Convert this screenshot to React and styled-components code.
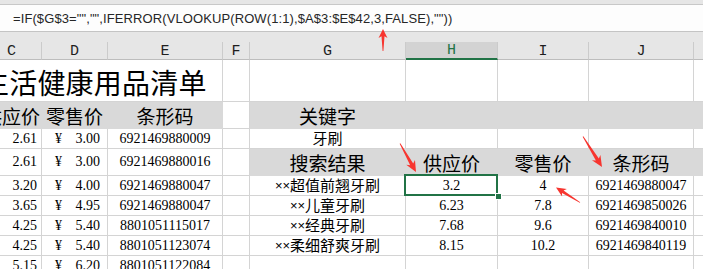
import React from "react";
import styled, { createGlobalStyle, css } from "styled-components";

const GlobalStyle = createGlobalStyle`
  html, body { margin: 0; padding: 0; background: #ffffff; overflow: hidden; }
`;

const CJK = `"Noto Sans CJK SC", "Liberation Sans", sans-serif`;
const MIXED = `"Liberation Sans", "Noto Sans CJK SC", sans-serif`;
const SERIF = `"Liberation Serif", "Noto Sans CJK SC", serif`;
const GRID = "#d4d4d4";
const FILL = "#d9d9d9";

const Window = styled.div`
  position: relative;
  width: 703px;
  height: 269px;
  overflow: hidden;
  background: #e6e6e6;
`;

const TopStrip = styled.div`
  height: 4px;
  border-bottom: 1px solid #c8c8c8;
  background: #e6e6e6;
`;

const FormulaBar = styled.div`
  height: 26px;
  border-bottom: 1px solid #c4c4c4;
  background: #fdfdfd;
  display: flex;
  align-items: center;
  padding-left: 13px;
  font-family: "Liberation Sans", Arial, sans-serif;
  font-size: 13px;
  color: #262626;
  letter-spacing: 0.1px;
  white-space: nowrap;
`;

const Gap = styled.div`
  height: 10px;
`;

const Sheet = styled.div`
  display: grid;
  grid-template-columns: 60px 66px 115px 27px 156px 92px 91px 105px 60px;
  grid-template-rows: 18px 42px 27px 20px 27px 20px 20px 20px 20px 20px;
  margin-left: -18px;
  background: #ffffff;
`;

const ColHead = styled.div`
  box-sizing: border-box;
  display: flex;
  align-items: center;
  justify-content: center;
  font-family: "Liberation Mono", monospace;
  font-size: 15px;
  padding-top: 1px;
  border-right: 1px solid #cbcbcb;
  ${(p) =>
    p.$active
      ? css`
          background: #d3d3d3;
          color: #217346;
          border-bottom: 2px solid #217346;
        `
      : css`
          background: #e6e6e6;
          color: #1e1e1e;
          border-bottom: 1px solid #bdbdbd;
        `}
`;

const kindStyles = {
  num: css`
    font-family: ${SERIF};
    font-size: 14px;
  `,
  text: css`
    font-family: ${MIXED};
    font-size: 15px;
  `,
  head: css`
    font-family: ${CJK};
    font-size: 19px;
  `,
  title: css`
    font-family: ${CJK};
    font-size: 28px;
    letter-spacing: 0.2px;
  `,
};

const Cell = styled.div`
  box-sizing: border-box;
  position: relative;
  display: flex;
  align-items: center;
  justify-content: ${(p) =>
    p.$align === "right" ? "flex-end" : p.$align === "left" ? "flex-start" : "center"};
  padding: ${(p) => (p.$align === "right" ? "0 4px 0 0" : "0")};
  white-space: nowrap;
  line-height: 1;
  color: #000;
  background: ${(p) => (p.$fill ? FILL : "#ffffff")};
  border-right: 1px solid ${(p) => (p.$fill ? FILL : GRID)};
  border-bottom: 1px solid ${(p) => (p.$fill ? FILL : GRID)};
  grid-column: ${(p) => (p.$span ? `span ${p.$span}` : "auto")};
  ${(p) => kindStyles[p.$kind || "num"]}
  ${(p) =>
    p.$selected &&
    css`
      &::after {
        content: "";
        position: absolute;
        left: -2px;
        top: -2px;
        right: -1px;
        bottom: -1px;
        border: 2px solid #217346;
        pointer-events: none;
      }
      &::before {
        content: "";
        position: absolute;
        right: -4px;
        bottom: -4px;
        width: 5px;
        height: 5px;
        background: #217346;
        outline: 1px solid #ffffff;
        z-index: 2;
      }
    `}
`;

const TitleText = styled.span`
  margin-left: -1px;
  padding-top: 2px;
`;

const Cross = styled.span`
  font-family: "Liberation Sans", sans-serif;
  font-size: 13px;
`;

const Money = styled(Cell)`
  justify-content: space-between;
  padding: 0 7px 0 13px;
`;

const Yen = styled.span`
  font-family: ${SERIF};
  font-size: 14px;
`;

const Overlay = styled.svg`
  position: absolute;
  left: 0;
  top: 0;
  width: 703px;
  height: 269px;
  pointer-events: none;
`;

function arrowPoints(tail, tip, h, w, neck, tailW) {
  const dx = tip[0] - tail[0];
  const dy = tip[1] - tail[1];
  const len = Math.hypot(dx, dy);
  const ux = dx / len;
  const uy = dy / len;
  const nx = -uy;
  const ny = ux;
  const bx = tip[0] - ux * h;
  const by = tip[1] - uy * h;
  const kx = tip[0] - ux * h * 0.8;
  const ky = tip[1] - uy * h * 0.8;
  const pts = [
    [tip[0], tip[1]],
    [bx + (nx * w) / 2, by + (ny * w) / 2],
    [kx + (nx * neck) / 2, ky + (ny * neck) / 2],
    [tail[0] + (nx * tailW) / 2, tail[1] + (ny * tailW) / 2],
    [tail[0] - (nx * tailW) / 2, tail[1] - (ny * tailW) / 2],
    [kx - (nx * neck) / 2, ky - (ny * neck) / 2],
    [bx - (nx * w) / 2, by - (ny * w) / 2],
  ];
  return pts.map((p) => `${p[0].toFixed(2)},${p[1].toFixed(2)}`).join(" ");
}

const arrows = [
  { tail: [383, 51], tip: [383, 29], h: 9, w: 9, neck: 3 },
  { tail: [400, 143.5], tip: [416, 172], h: 11, w: 10, neck: 3.5 },
  { tail: [583, 136.5], tip: [602, 167], h: 11, w: 10, neck: 3.5 },
  { tail: [580, 202.5], tip: [556, 187.5], h: 10, w: 9, neck: 3 },
];

const Arrow = ({ tail, tip, h, w, neck }) => (
  <polygon points={arrowPoints(tail, tip, h, w, neck, 0.8)} fill="#f7352f" />
);

const columns = ["C", "D", "E", "F", "G", "H", "I", "J", ""];

const leftRows = [
  ["2.61", "3.00", "6921469880009"],
  ["2.61", "3.00", "6921469880016"],
  ["3.20", "4.00", "6921469880047"],
  ["3.65", "4.95", "6921469880047"],
  ["4.25", "5.40", "8801051115017"],
  ["4.25", "5.40", "8801051123074"],
  ["5.15", "6.20", "8801051122084"],
];

const results = [
  ["超值前翘牙刷", "3.2", "4", "6921469880047"],
  ["儿童牙刷", "6.23", "7.8", "6921469850026"],
  ["经典牙刷", "7.68", "9.6", "6921469840010"],
  ["柔细舒爽牙刷", "8.15", "10.2", "6921469840119"],
  ["", "", "", ""],
];

const LeftPart = ({ row }) => (
  <>
    <Cell $align="right">{row[0]}</Cell>
    <Money>
      <Yen>¥</Yen>
      <span>{row[1]}</span>
    </Money>
    <Cell>{row[2]}</Cell>
    <Cell />
  </>
);

export default function App() {
  return (
    <Window>
      <GlobalStyle />
      <TopStrip />
      <FormulaBar>=IF($G$3="","",IFERROR(VLOOKUP(ROW(1:1),$A$3:$E$42,3,FALSE),""))</FormulaBar>
      <Gap />
      <Sheet>
        {columns.map((c, i) => (
          <ColHead key={i} $active={c === "H"}>
            {c}
          </ColHead>
        ))}

        {/* row 1 */}
        <Cell $span={3} $kind="title" $align="left">
          <TitleText>生活健康用品清单</TitleText>
        </Cell>
        <Cell />
        <Cell />
        <Cell />
        <Cell />
        <Cell />
        <Cell />

        {/* row 2 */}
        <Cell $fill $kind="head">供应价</Cell>
        <Cell $fill $kind="head">零售价</Cell>
        <Cell $fill $kind="head">条形码</Cell>
        <Cell />
        <Cell $fill $kind="head">关键字</Cell>
        <Cell $fill />
        <Cell $fill />
        <Cell $fill />
        <Cell $fill />

        {/* row 3 */}
        <LeftPart row={leftRows[0]} />
        <Cell $kind="text">牙刷</Cell>
        <Cell />
        <Cell />
        <Cell />
        <Cell />

        {/* row 4 */}
        <LeftPart row={leftRows[1]} />
        <Cell $fill $kind="head">搜索结果</Cell>
        <Cell $fill $kind="head">供应价</Cell>
        <Cell $fill $kind="head">零售价</Cell>
        <Cell $fill $kind="head">条形码</Cell>
        <Cell $fill />

        {/* rows 5-9 */}
        {results.map((r, i) => (
          <React.Fragment key={i}>
            <LeftPart row={leftRows[i + 2]} />
            <Cell $kind="text">
              {r[0] && <Cross>××</Cross>}
              {r[0]}
            </Cell>
            <Cell $selected={i === 0}>{r[1]}</Cell>
            <Cell>{r[2]}</Cell>
            <Cell>{r[3]}</Cell>
            <Cell />
          </React.Fragment>
        ))}
      </Sheet>
      <Overlay viewBox="0 0 703 269">
        {arrows.map((a, i) => (
          <Arrow key={i} {...a} />
        ))}
      </Overlay>
    </Window>
  );
}
